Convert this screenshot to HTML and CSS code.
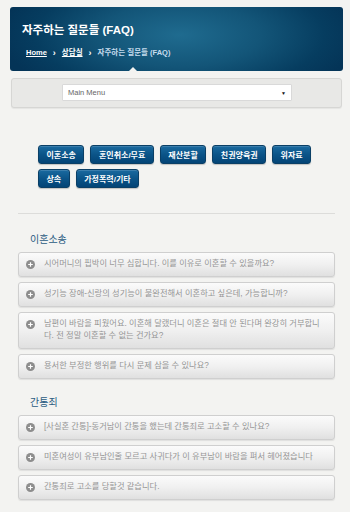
FILE: index.html
```html
<!DOCTYPE html>
<html lang="ko">
<head>
<meta charset="utf-8">
<title>자주하는 질문들 (FAQ)</title>
<link rel="stylesheet" href="styles.css">
</head>
<body>
<header class="hero">
  <h1 class="hero-title">자주하는 질문들 (FAQ)</h1>
  <nav class="crumbs">
    <a href="#" class="crumb-link">Home</a>
    <span class="crumb-sep">›</span>
    <a href="#" class="crumb-link">상담실</a>
    <span class="crumb-sep">›</span>
    <span class="crumb-current">자주하는 질문들 (FAQ)</span>
  </nav>
  <span class="notch"></span>
</header>

<div class="menu-panel">
  <div class="menu-select">
    <span class="menu-label">Main Menu</span>
    <span class="menu-arrow">▼</span>
  </div>
</div>

<div class="cats">
  <a href="#" class="cat">이혼소송</a>
  <a href="#" class="cat">혼인취소/무효</a>
  <a href="#" class="cat">재산분할</a>
  <a href="#" class="cat">친권양육권</a>
  <a href="#" class="cat">위자료</a>
  <a href="#" class="cat">상속</a>
  <a href="#" class="cat">가정폭력/기타</a>
</div>

<main class="content">
  <hr class="rule">
  <section class="faq-section">
    <h2 class="faq-heading">이혼소송</h2>
    <ul class="faq-list">
      <li class="faq-item"><svg class="plus" viewBox="0 0 9 9"><circle cx="4.5" cy="4.5" r="4.5" fill="#8d8d8d"/><path d="M4.5 2.2v4.6M2.2 4.5h4.6" stroke="#fff" stroke-width="1.2"/></svg><span class="faq-text">시어머니의 핍박이 너무 심합니다. 이를 이유로 이혼할 수 있을까요?</span></li>
      <li class="faq-item"><svg class="plus" viewBox="0 0 9 9"><circle cx="4.5" cy="4.5" r="4.5" fill="#8d8d8d"/><path d="M4.5 2.2v4.6M2.2 4.5h4.6" stroke="#fff" stroke-width="1.2"/></svg><span class="faq-text">성기능 장애-신랑의 성기능이 불완전해서 이혼하고 싶은데, 가능합니까?</span></li>
      <li class="faq-item"><svg class="plus" viewBox="0 0 9 9"><circle cx="4.5" cy="4.5" r="4.5" fill="#8d8d8d"/><path d="M4.5 2.2v4.6M2.2 4.5h4.6" stroke="#fff" stroke-width="1.2"/></svg><span class="faq-text">남편이 바람을 피웠어요. 이혼해 달랬더니 이혼은 절대 안 된다며 완강히 거부합니다. 전 정말 이혼할 수 없는 건가요?</span></li>
      <li class="faq-item"><svg class="plus" viewBox="0 0 9 9"><circle cx="4.5" cy="4.5" r="4.5" fill="#8d8d8d"/><path d="M4.5 2.2v4.6M2.2 4.5h4.6" stroke="#fff" stroke-width="1.2"/></svg><span class="faq-text">용서한 부정한 행위를 다시 문제 삼을 수 있나요?</span></li>
    </ul>
  </section>
  <section class="faq-section">
    <h2 class="faq-heading">간통죄</h2>
    <ul class="faq-list">
      <li class="faq-item"><svg class="plus" viewBox="0 0 9 9"><circle cx="4.5" cy="4.5" r="4.5" fill="#8d8d8d"/><path d="M4.5 2.2v4.6M2.2 4.5h4.6" stroke="#fff" stroke-width="1.2"/></svg><span class="faq-text">[사실혼 간통]-동거남이 간통을 했는데 간통죄로 고소할 수 있나요?</span></li>
      <li class="faq-item"><svg class="plus" viewBox="0 0 9 9"><circle cx="4.5" cy="4.5" r="4.5" fill="#8d8d8d"/><path d="M4.5 2.2v4.6M2.2 4.5h4.6" stroke="#fff" stroke-width="1.2"/></svg><span class="faq-text">미혼여성이 유부남인줄 모르고 사귀다가 이 유부남이 바람을 펴서 헤어졌습니다</span></li>
      <li class="faq-item"><svg class="plus" viewBox="0 0 9 9"><circle cx="4.5" cy="4.5" r="4.5" fill="#8d8d8d"/><path d="M4.5 2.2v4.6M2.2 4.5h4.6" stroke="#fff" stroke-width="1.2"/></svg><span class="faq-text">간통죄로 고소를 당할것 같습니다.</span></li>
    </ul>
  </section>
</main>
</body>
</html>
```

FILE: styles.css
```css
* { box-sizing: border-box; }
html, body { margin: 0; padding: 0; }
body {
  background: #f3f3f1;
  font-family: "Liberation Sans", "Noto Sans CJK KR", sans-serif;
  width: 350px;
  height: 512px;
  overflow: hidden;
}

.hero {
  position: relative;
  margin: 7px 7px 0 10px;
  height: 64px;
  border-radius: 3px;
  background: radial-gradient(ellipse 180px 70px at 170px 28px, #1f6b8f 0%, #135578 45%, #063d60 80%, #043457 100%);
  padding: 15px 0 0 12px;
}
.hero-title {
  margin: 0;
  color: #fff;
  font-size: 11.5px;
  font-weight: bold;
  line-height: 16px;
}
.crumbs {
  margin-top: 10px;
  padding-left: 4px;
  display: flex;
  align-items: center;
  font-size: 7.5px;
  font-weight: bold;
  line-height: 10px;
}
.crumb-link { color: #fff; text-decoration: underline; }
.crumb-sep { color: #fff; margin: 0 6px; font-size: 9px; }
.crumb-current { color: #c6dced; }
.notch {
  position: absolute;
  left: 119px;
  bottom: 0;
  width: 0;
  height: 0;
  border-left: 4px solid transparent;
  border-right: 4px solid transparent;
  border-bottom: 4px solid #f3f3f1;
}

.menu-panel {
  margin: 7px 8px 0 11px;
  height: 30px;
  background: #e8e8e6;
  border: 1px solid #d6d6d4;
  border-radius: 3px;
  box-shadow: 0 1px 1px rgba(0,0,0,0.06);
  padding: 5px 0 0 50px;
}
.menu-select {
  width: 230px;
  height: 17px;
  background: #fff;
  border: 1px solid #d9d9d9;
  border-radius: 1px;
  display: flex;
  align-items: center;
  justify-content: space-between;
  padding: 0 5px;
}
.menu-label { font-size: 7.5px; color: #666; }
.menu-arrow { font-size: 5px; color: #111; }

.cats {
  margin: 37px 0 0 38px;
  width: 285px;
  display: flex;
  flex-wrap: wrap;
  gap: 5px 6px;
}
.cat {
  height: 19px;
  padding: 0 7.5px;
  display: flex;
  align-items: center;
  border-radius: 3px;
  border: 1px solid #0a3f66;
  background: linear-gradient(#1a6aa0, #0b5488 50%, #034476);
  box-shadow: inset 0 1px 0 rgba(255,255,255,0.15), 0 1px 1px rgba(0,0,0,0.2);
  color: #fff;
  font-size: 8px;
  font-weight: bold;
  text-decoration: none;
}

.content { margin: 0 15px 0 18px; }
.rule {
  margin: 25px 0 0;
  border: 0;
  border-top: 1px solid #dcdcda;
  height: 0;
}
.faq-section { padding: 0; }
.faq-heading {
  margin: 19px 0 5px 12px;
  font-size: 10px;
  line-height: 14px;
  font-weight: normal;
  color: #2a5b82;
}
.faq-section + .faq-section .faq-heading { margin-top: 17px; }
.faq-list {
  list-style: none;
  margin: 0;
  padding: 0;
  display: flex;
  flex-direction: column;
  gap: 5px;
}
.faq-item {
  display: flex;
  align-items: flex-start;
  border: 1px solid #cfcfcf;
  border-radius: 3px;
  background: linear-gradient(#fbfbfb, #f0f0f0 50%, #e0e0e0);
  box-shadow: 0 1px 1px rgba(0,0,0,0.08);
  padding: 5px 8px 6px 7px;
}
.plus {
  width: 9px;
  height: 9px;
  flex: none;
  margin: 1.5px 9px 0 0;
}
.faq-text {
  font-size: 8.25px;
  line-height: 12px;
  color: #959595;
}
```
